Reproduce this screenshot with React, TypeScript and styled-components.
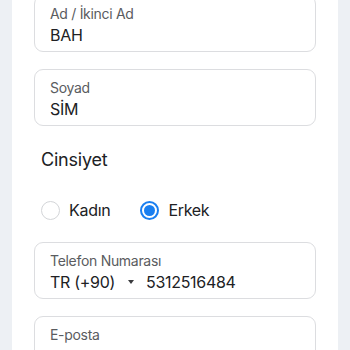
import React, { useState } from 'react';
import styled, { createGlobalStyle } from 'styled-components';

const GlobalStyle = createGlobalStyle`
  html, body {
    margin: 0;
    padding: 0;
    background: #edf0f4;
    font-family: Inter, "Noto Sans", "Liberation Sans", sans-serif;
    overflow: hidden;
  }
`;

const Card = styled.div`
  margin: -21px 12px 0 12px;
  background: #ffffff;
  padding: 16px 22px 40px 22px;
  display: flex;
  flex-direction: column;
  gap: 17px;
`;

const Field = styled.div`
  border: 1px solid #dcdde0;
  border-radius: 9px;
  height: 57px;
  padding: 9px 15px 0 15px;
  display: flex;
  flex-direction: column;
  gap: 2px;
  box-sizing: border-box;
`;

const Label = styled.div`
  font-size: 14px;
  line-height: 17px;
  letter-spacing: -0.3px;
  color: #5a5c60;
`;

const Value = styled.div<{ $faded?: boolean }>`
  font-size: 16px;
  line-height: 22px;
  letter-spacing: -0.3px;
  color: ${p => (p.$faded ? '#c4c6ca' : '#202124')};
  display: flex;
  align-items: center;
`;

const SectionTitle = styled.div`
  font-size: 18px;
  letter-spacing: -0.2px;
  color: #202124;
  padding: 5px 0 0 7px;
  line-height: 24px;
`;

const RadioRow = styled.div`
  display: flex;
  align-items: center;
  gap: 30px;
  height: 20px;
  padding: 11px 0 5px 7px;
`;

const RadioOption = styled.label`
  display: flex;
  align-items: center;
  gap: 9px;
  font-size: 16px;
  letter-spacing: -0.3px;
  color: #202124;
  cursor: pointer;
`;

const Circle = styled.span<{ $checked: boolean }>`
  width: 19px;
  height: 19px;
  border-radius: 50%;
  box-sizing: border-box;
  border: ${p => (p.$checked ? '2px solid #1a7ff0' : '1.5px solid #d3d5d8')};
  display: flex;
  align-items: center;
  justify-content: center;
  &::after {
    content: '';
    width: 11px;
    height: 11px;
    border-radius: 50%;
    background: ${p => (p.$checked ? '#1a7ff0' : 'transparent')};
  }
`;

const Country = styled.span`
  display: flex;
  align-items: center;
  margin-right: 12px;
`;

const Caret = styled.span`
  width: 0;
  height: 0;
  border-left: 3.5px solid transparent;
  border-right: 3.5px solid transparent;
  border-top: 4px solid #3a3b3e;
  margin-left: 13px;
`;

export default function App() {
  const [gender, setGender] = useState<'kadin' | 'erkek'>('erkek');

  return (
    <>
      <GlobalStyle />
      <Card>
        <Field>
          <Label>Ad / İkinci Ad</Label>
          <Value>BAH</Value>
        </Field>
        <Field>
          <Label>Soyad</Label>
          <Value>SİM</Value>
        </Field>
        <SectionTitle>Cinsiyet</SectionTitle>
        <RadioRow>
          <RadioOption onClick={() => setGender('kadin')}>
            <Circle $checked={gender === 'kadin'} />
            Kadın
          </RadioOption>
          <RadioOption onClick={() => setGender('erkek')}>
            <Circle $checked={gender === 'erkek'} />
            Erkek
          </RadioOption>
        </RadioRow>
        <Field>
          <Label>Telefon Numarası</Label>
          <Value>
            <Country>
              TR (+90)
              <Caret />
            </Country>
            5312516484
          </Value>
        </Field>
        <Field>
          <Label>E-posta</Label>
          <Value $faded>ornek@eposta.com</Value>
        </Field>
      </Card>
    </>
  );
}
